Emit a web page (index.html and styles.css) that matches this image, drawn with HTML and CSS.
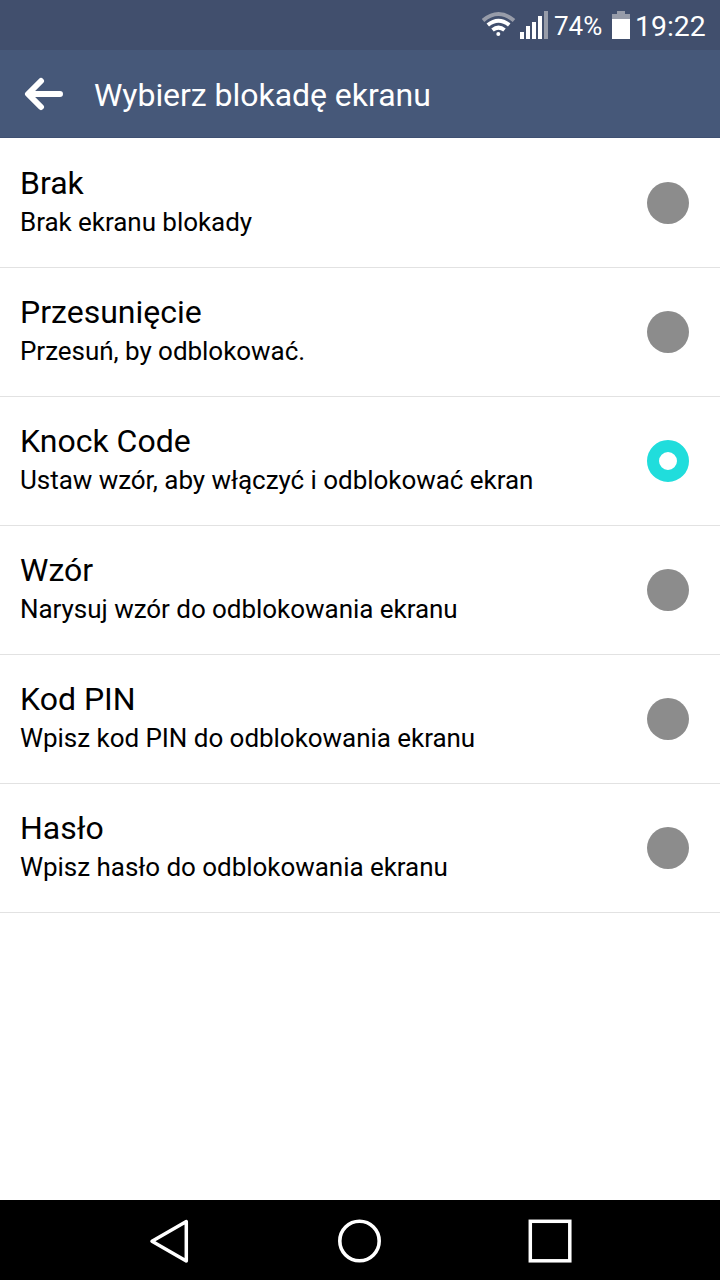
FILE: index.html
```
<!DOCTYPE html>
<html lang="pl">
<head>
  <meta charset="UTF-8">
  <title>Wybierz blokadę ekranu</title>
  <link rel="stylesheet" href="styles.css">
</head>
<body>
  <div class="screen">
    <div class="status-bar">
      <svg class="wifi" width="34" height="28" viewBox="482 10 34 28" fill="none" stroke-width="4">
        <path d="M483 20.5 Q498.500 7.500 514 20.5" stroke="#979ca9"/>
        <path d="M487.800 25 Q498.500 16.500 509.200 25" stroke="#fff"/>
        <path d="M492.500 30 Q498.500 25.300 504.500 30" stroke="#fff"/>
        <circle cx="498.300" cy="34" r="2" fill="#fff"/>
      </svg>
      <svg class="signal" width="28" height="28" viewBox="0 0 28 28" fill="#fff">
        <rect x="0" y="21" width="4" height="7"/>
        <rect x="6" y="15" width="4" height="13"/>
        <rect x="12" y="11" width="4" height="17"/>
        <rect x="18" y="5" width="4" height="23"/>
        <rect x="24" y="0" width="4" height="28" fill="#979ca9"/>
      </svg>
      <span class="percent">74%</span>
      <svg class="battery" width="18" height="28" viewBox="0 0 18 28">
        <path d="M5 0h8v3h5v5H0V3h5z" fill="#979ca9"/>
        <rect x="0" y="8" width="18" height="20" fill="#fff"/>
      </svg>
      <span class="clock">19:22</span>
    </div>

    <div class="header">
      <svg class="back" width="40" height="34" viewBox="0 0 40 34" fill="none" stroke="#fff" stroke-width="6" stroke-linecap="round" stroke-linejoin="round">
        <path d="M17 4L4 17l13 13M5 17h31"/>
      </svg>
      <h1>Wybierz blokadę ekranu</h1>
    </div>

    <ul class="list">
      <li>
        <div class="text">
          <h2>Brak</h2>
          <p>Brak ekranu blokady</p>
        </div>
        <span class="radio"></span>
      </li>
      <li>
        <div class="text">
          <h2>Przesunięcie</h2>
          <p>Przesuń, by odblokować.</p>
        </div>
        <span class="radio"></span>
      </li>
      <li>
        <div class="text">
          <h2>Knock Code</h2>
          <p>Ustaw wzór, aby włączyć i odblokować ekran</p>
        </div>
        <span class="radio active"></span>
      </li>
      <li>
        <div class="text">
          <h2>Wzór</h2>
          <p>Narysuj wzór do odblokowania ekranu</p>
        </div>
        <span class="radio"></span>
      </li>
      <li>
        <div class="text">
          <h2>Kod PIN</h2>
          <p>Wpisz kod PIN do odblokowania ekranu</p>
        </div>
        <span class="radio"></span>
      </li>
      <li>
        <div class="text">
          <h2>Hasło</h2>
          <p>Wpisz hasło do odblokowania ekranu</p>
        </div>
        <span class="radio"></span>
      </li>
    </ul>

    <div class="nav-bar">
      <svg width="44" height="44" viewBox="0 0 44 44" fill="none" stroke="#fff" stroke-width="3.500" stroke-linejoin="round">
        <path d="M39.300 2.500v39.500L5 22.300z"/>
      </svg>
      <svg width="44" height="44" viewBox="0 0 44 44" fill="none" stroke="#fff" stroke-width="3.600">
        <circle cx="21.500" cy="22" r="19.700"/>
      </svg>
      <svg width="44" height="44" viewBox="0 0 44 44" fill="none" stroke="#fff" stroke-width="3.500">
        <rect x="2.300" y="2.300" width="39.500" height="39.500"/>
      </svg>
    </div>
  </div>
</body>
</html>
```
FILE: styles.css
```
* {
  box-sizing: border-box;
}

body {
  font-family: Roboto, sans-serif;
  margin: 0;
  background-color: #fff;
  color: #000;
}

h1, h2, p, ul {
  margin: 0;
  padding: 0;
  font-weight: 400;
}

.screen {
  display: flex;
  flex-direction: column;
  height: 1280px;
}

.status-bar {
  display: flex;
  justify-content: flex-end;
  height: 50px;
  padding: 11px 14px 0 0;
  background-color: #414f6d;
  color: #fff;
}

.wifi {
  margin-top: -1px;
  margin-right: 4px;
}

.percent {
  width: 50px;
  margin-left: 6px;
  margin-right: 8px;
  font-size: 26px;
  line-height: 30px;
}

.clock {
  width: 71px;
  margin-left: 5px;
  font-size: 28.4px;
  line-height: 32px;
}

.header {
  display: flex;
  align-items: center;
  height: 88px;
  padding-left: 24px;
  background-color: #465879;
  border-bottom: 1px solid #3f5072;
  color: #fff;
}

.header h1 {
  margin-left: 30px;
  padding-top: 3px;
  font-size: 32px;
  line-height: 40px;
  letter-spacing: -0.04px;
}

.list {
  flex: 1;
  padding-top: 1px;
  list-style: none;
}

.list li {
  display: flex;
  align-items: center;
  justify-content: space-between;
  height: 129px;
  padding: 0 31px 0 20px;
  border-bottom: 1px solid #e2e2e2;
}

.text {
  padding-bottom: 4px;
}

.list h2 {
  font-size: 32px;
  line-height: 42px;
}

.list p {
  font-size: 26px;
  line-height: 36px;
  letter-spacing: -0.04px;
}

.radio {
  width: 42px;
  height: 42px;
  border-radius: 50%;
  background-color: #8c8c8c;
}

.radio.active {
  border: 12px solid #20dddc;
  background-color: #fff;
}

.nav-bar {
  display: flex;
  justify-content: space-between;
  align-items: center;
  height: 80px;
  padding: 2px 148px 0 147px;
  background-color: #000;
}
```
